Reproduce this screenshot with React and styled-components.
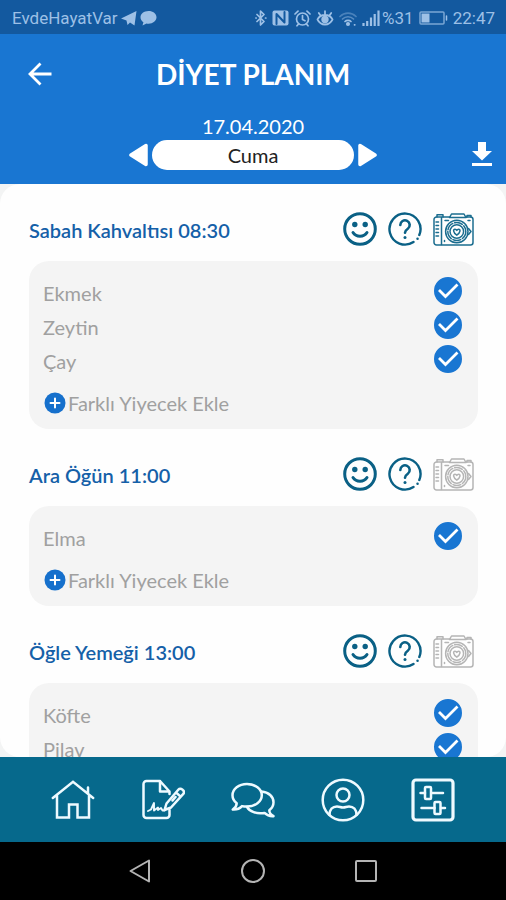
import { useState } from "react";
import styled, { createGlobalStyle } from "styled-components";

const GlobalStyle = createGlobalStyle`
  * {
    box-sizing: border-box;
  }
  body {
    margin: 0;
    font-family: "Lato", "Noto Sans", sans-serif;
    background: #000000;
  }
`;

const Screen = styled.div`
  display: flex;
  flex-direction: column;
  height: 100vh;
`;

const StatusBar = styled.div`
  display: flex;
  flex-shrink: 0;
  align-items: center;
  justify-content: space-between;
  height: 34px;
  padding: 2px 11px 0 12px;
  background: #13599f;
  color: #9dc0e6;
  font-family: "Roboto", sans-serif;
  font-size: 17px;
  line-height: 20px;
`;

const StatusGroup = styled.div`
  display: flex;
  align-items: center;
  gap: ${({ $gap }) => $gap}px;
`;

const Header = styled.header`
  flex-shrink: 0;
  background: #1976d2;
  color: #ffffff;
`;

const TitleBar = styled.div`
  display: grid;
  grid-template-columns: 1fr auto 1fr;
  align-items: center;
  height: 80px;
  padding: 0 24px;
`;

const Title = styled.h1`
  margin: 0;
  font-size: 28px;
  font-weight: 700;
  line-height: 34px;
`;

const IconButton = styled.button`
  display: flex;
  align-items: center;
  justify-content: center;
  justify-self: ${({ $side }) => $side || "auto"};
  padding: 0;
  border: 0;
  background: none;
  color: ${({ $color }) => $color || "inherit"};
  cursor: pointer;
`;

const DateBar = styled.div`
  display: grid;
  grid-template-columns: 1fr 49% 1fr;
  align-items: end;
  height: 70px;
  padding-bottom: 15px;
`;

const DateColumn = styled.div`
  grid-column: 2;
  display: flex;
  flex-direction: column;
  gap: 2px;
`;

const DateText = styled.time`
  font-size: 20px;
  line-height: 24px;
  text-align: center;
`;

const DayRow = styled.div`
  display: flex;
  align-items: center;
  gap: 4px;
`;

const DayPill = styled.div`
  flex: 1;
  height: 30px;
  border-radius: 15px;
  background: #ffffff;
  color: #222222;
  font-size: 20px;
  line-height: 30px;
  text-align: center;
`;

const DownloadSlot = styled.div`
  display: flex;
  justify-content: flex-end;
  padding: 0 12px 2px 0;
`;

const Content = styled.main`
  flex: 1;
  min-height: 0;
  overflow: hidden;
  background: #f3f4f4;
`;

const Sheet = styled.div`
  height: 100%;
  overflow: hidden;
  padding: 28px 28px 0 29px;
  border-radius: 20px;
  background: #fefefe;
`;

const Meal = styled.section`
  margin-bottom: 28px;
`;

const MealHeader = styled.div`
  display: flex;
  align-items: center;
  justify-content: space-between;
  height: 34px;
  margin-bottom: 15px;
  padding-right: 4px;
`;

const MealTitle = styled.h2`
  margin: 0;
  padding-top: 2px;
  color: #1560a8;
  font-size: 20px;
  font-weight: 600;
  line-height: 24px;
`;

const MealActions = styled.div`
  display: flex;
  gap: 11px;
`;

const FoodCard = styled.div`
  padding: 13px 16px 9px 14px;
  border-radius: 20px;
  background: #f4f4f4;
  color: #a0a0a0;
  font-size: 20px;
`;

const FoodRow = styled.label`
  display: flex;
  align-items: center;
  justify-content: space-between;
  height: 34px;
  cursor: pointer;
`;

const FoodName = styled.span`
  padding-top: 4px;
  line-height: 24px;
`;

const CheckBox = styled.span`
  display: grid;

  & > * {
    grid-area: 1 / 1;
  }
  svg {
    pointer-events: none;
  }
  input:not(:checked) + svg {
    visibility: hidden;
  }
`;

const CheckInput = styled.input`
  appearance: none;
  width: 28px;
  height: 28px;
  margin: 0;
  border: 2px solid #1976d2;
  border-radius: 50%;

  &:checked {
    background: #1976d2;
  }
`;

const AddButton = styled.button`
  display: flex;
  align-items: center;
  gap: 2px;
  height: 34px;
  margin-top: 10px;
  padding: 0 0 0 1px;
  border: 0;
  background: none;
  color: inherit;
  font: inherit;
  line-height: 24px;
  cursor: pointer;
`;

const TabBar = styled.nav`
  display: flex;
  flex-shrink: 0;
  height: 85px;
  padding: 0 28px;
  background: #06698c;
`;

const Tab = styled.a`
  display: flex;
  flex: 1;
  align-items: center;
  justify-content: center;
  color: #eefaff;
`;

const SystemBar = styled.div`
  display: flex;
  flex-shrink: 0;
  height: 58px;
  padding: 0 84px;
  background: #000000;
`;

const SystemButton = styled(IconButton)`
  flex: 1;
  color: #b4b4b4;
`;

const Svg = ({ w, h, children, ...rest }) => (
  <svg
    width={w}
    height={h}
    viewBox={`0 0 ${w} ${h}`}
    fill="none"
    stroke="currentColor"
    strokeLinecap="round"
    strokeLinejoin="round"
    aria-hidden="true"
    {...rest}
  >
    {children}
  </svg>
);

const TelegramIcon = () => (
  <Svg w={16} h={16} fill="currentColor" stroke="none">
    <path d="M0 8.500 15.500 1 13.500 15.500 9 12.500 6.500 15 5.500 10.500Z" />
  </Svg>
);

const BubbleIcon = () => (
  <Svg w={17} h={16} fill="currentColor" stroke="none">
    <path d="M8.500 1C4 1 .5 3.800.5 7.300c0 2 1.100 3.800 2.900 5L2.500 15.500l4-2c.6.100 1.300.200 2 .200 4.500 0 8-2.800 8-6.400S13 1 8.500 1Z" />
  </Svg>
);

const BluetoothIcon = () => (
  <Svg w={12} h={18} strokeWidth="1.700">
    <path d="M2 5.500 9 12.500 5.500 16V2L9 5.500 2 12.500M.8 9h.4M10.500 9h.4" />
  </Svg>
);

const NfcIcon = () => (
  <Svg w={17} h={16} stroke="none">
    <rect x="0.500" y="0.500" width="16" height="15" rx="2" fill="currentColor" />
    <path d="M4.500 14V4l8 8.500V2" stroke="#13599f" strokeWidth="2" />
  </Svg>
);

const AlarmIcon = () => (
  <Svg w={17} h={17} strokeWidth="1.700">
    <circle cx="8.500" cy="9" r="6" />
    <path d="M1 4 4 1.200M16 4l-3-2.800M8.500 5.500V9.500l2.500 1.200M4.500 14 3 15.800M12.500 14l1.500 1.800" />
  </Svg>
);

const EyeIcon = () => (
  <Svg w={18} h={18} strokeWidth="1.800">
    <path d="M1.500 10.500C3 7.500 5.800 6 9 6s6 1.500 7.500 4.500C15 13.500 12.200 15.500 9 15.500S3 13.500 1.500 10.500ZM9 5.500V2.200M4.500 6.500 2.800 4M13.500 6.500 15.200 4" />
    <circle cx="9" cy="10.500" r="2.800" fill="currentColor" />
  </Svg>
);

const WifiIcon = () => (
  <Svg w={18} h={17} strokeWidth="1.700">
    <path d="M1 6.500C5.500 2 12.500 2 17 6.500" opacity=".4" />
    <path d="M3.500 9c3-3 8-3 11 0" opacity=".5" />
    <path d="M6 11.500c1.500-1.500 4.500-1.500 6 0" />
    <circle cx="9" cy="14" r="1.200" fill="currentColor" />
    <path d="M15.500 14.800h.3" />
  </Svg>
);

const SignalIcon = () => (
  <Svg w={18} h={17} strokeWidth="2.200" strokeLinecap="butt">
    <path d="M1.500 16v-3M5.200 16v-5M9 16V7.500M12.700 16V4M16.500 16V0.500" />
  </Svg>
);

const BatteryIcon = () => (
  <Svg w={29} h={14} strokeWidth="1.500">
    <rect x="1" y="1" width="24" height="12" rx="1" opacity=".75" />
    <path d="M27.500 5v4" />
    <rect x="2.500" y="2.500" width="8" height="9" fill="currentColor" stroke="none" />
  </Svg>
);

const BackIcon = () => (
  <Svg w={32} h={32} strokeWidth="2.800" strokeLinecap="butt" strokeLinejoin="miter">
    <path d="M27.500 16H6.500M16.500 5.500 6 16l10.500 10.500" />
  </Svg>
);

const TriangleIcon = ({ flipped }) => (
  <Svg w={19} h={24} fill="currentColor" strokeWidth="3.500">
    <path d={flipped ? "M2 2.500V21.500L17 12Z" : "M17 2.500V21.500L2 12Z"} />
  </Svg>
);

const DownloadIcon = () => (
  <Svg w={24} h={28} fill="currentColor" stroke="none">
    <path d="M8 2h8v9h6L12 20.500 2 11h6ZM2 23h20v3H2Z" />
  </Svg>
);

const SmileIcon = () => (
  <Svg w={34} h={34} strokeWidth="3">
    <circle cx="17" cy="17" r="15.300" />
    <path d="M10 20.500c3.200 5 10.800 5 14 0" />
    <circle cx="11.800" cy="12.500" r="2.700" fill="currentColor" stroke="none" />
    <circle cx="22.200" cy="12.500" r="2.700" fill="currentColor" stroke="none" />
  </Svg>
);

const QuestionIcon = () => (
  <Svg w={34} h={34} strokeWidth="2.400">
    <path d="M25.500 30A15.500 15.500 0 1 1 31.300 23" />
    <path d="M12.300 13a4.700 4.700 0 1 1 7.500 3.800c-1.900 1.300-2.800 2-2.800 4" strokeWidth="2.600" />
    <circle cx="17" cy="25.500" r="1.500" fill="currentColor" stroke="none" />
    <path d="M29.500 26.700h.1" />
  </Svg>
);

const CameraIcon = () => (
  <Svg w={41} h={34} strokeWidth="1.500">
    <path d="M17 5H3.500A2.500 2.500 0 0 0 1 7.500v23A2.500 2.500 0 0 0 3.500 33h34a2.500 2.500 0 0 0 2.500-2.500v-23A2.500 2.500 0 0 0 37.500 5H33" />
    <path d="M16.500 5.500 18.500 2h12.500l2 3.500H16.500M4 5V2.800h6V5M34 5V3.500h4V5" />
    <path d="M8.500 5.500V32.500M3 10h2.500M3 13.500h2.500M3 17h2.500M3 20.500h2.500M3 24h2.500M12 8.500h3.500M35 8.500h2M11.500 28.500v1" />
    <circle cx="23.800" cy="19.500" r="11.200" />
    <circle cx="23.800" cy="19.500" r="9" strokeDasharray="8 2" />
    <circle cx="23.800" cy="19.500" r="6.800" />
    <path d="M23.800 23.200c-4-2.700-3.800-6-1.800-6 .9 0 1.500.5 1.800 1.200.3-.7.900-1.200 1.800-1.200 2 0 2.200 3.300-1.800 6Z" />
    <path d="M35.500 16.500 38 19.500l-2.500 3" />
  </Svg>
);

const CheckMark = () => (
  <Svg w={28} h={28} stroke="#ffffff" strokeWidth="2.800" strokeLinecap="butt" strokeLinejoin="miter">
    <path d="M5 13 11.500 19.500 23.500 7.500" />
  </Svg>
);

const PlusIcon = () => (
  <Svg w={22} h={22} stroke="#ffffff" strokeWidth="2">
    <circle cx="11" cy="11" r="10.500" fill="#1670cc" stroke="none" />
    <path d="M11 6.500v9M6.500 11h9" />
  </Svg>
);

const HomeIcon = () => (
  <Svg w={44} h={44} strokeWidth="2.500" strokeLinejoin="miter">
    <path d="M1.800 20 22 3.800 42.200 20M6 17.500V39.500H18V26.500h8.500V39.500H38V17.500M37 15V9.500" />
  </Svg>
);

const NoteIcon = () => (
  <Svg w={44} h={44} strokeWidth="2.500">
    <path d="M28.500 13.500 19 3H5.500A3 3 0 0 0 2.500 6v31a3 3 0 0 0 3 3h20a3 3 0 0 0 3-3v-5M28.500 16v-2.500H19V3" />
    <path d="M23.500 32 25.500 25.500 37.500 11.500a2.500 2.500 0 0 1 3.600-.2l1 .9a2.500 2.500 0 0 1 .2 3.600L30 29.500ZM35 14.500l4.600 4.200M31.500 22.500 34.500 19" />
    <path d="M7 33 10 31.500 13 25v7.500L17 29.500v2.500l3-2 1.500 2.500h2" strokeWidth="1.900" />
  </Svg>
);

const ChatIcon = () => (
  <Svg w={44} h={44} strokeWidth="2.500">
    <path d="M16 6C7.800 6 1.500 11 1.500 17.300c0 3.400 1.600 6 4.200 8C5.700 28 4 30 1.800 31.500c3.700.3 7-1 9.200-3.400 1.600.4 3.200.5 5 .5 8.200 0 14.800-5 14.800-11.300S24.200 6 16 6Z" />
    <path d="M30.500 13.500c7.200.6 12 5.200 12 10.700 0 3.200-1.500 6-4.200 8 0 2.600 1.700 4.600 4.200 6-3.700.3-6.700-1-9-3.300-8 1.300-15-1.200-17.500-6" />
  </Svg>
);

const UserIcon = () => (
  <Svg w={44} h={44} strokeWidth="2.500">
    <circle cx="22" cy="22" r="20.300" />
    <circle cx="22" cy="17" r="6.500" />
    <path d="M8.500 37c0-5.500 3-8.500 7.500-8.500 2.500 0 3.500 1 6 1s3.500-1 6-1c4.500 0 7.500 3 7.500 8.500" />
  </Svg>
);

const SettingsIcon = () => (
  <Svg w={44} h={44} strokeWidth="2.500">
    <rect x="2" y="2" width="40" height="40" rx="3" strokeWidth="3.200" />
    <path d="M9.500 15H14M20.500 15H32M10.500 30H23.500M30 30h4" />
    <rect x="14" y="9" width="6" height="12" rx="1" />
    <rect x="23.500" y="24" width="6" height="12" rx="1" />
  </Svg>
);

const meals = [
  { title: "Sabah Kahvaltısı", time: "08:30", foods: ["Ekmek", "Zeytin", "Çay"], photo: true },
  { title: "Ara Öğün", time: "11:00", foods: ["Elma"] },
  { title: "Öğle Yemeği", time: "13:00", foods: ["Köfte", "Pilav"] },
];

const tabs = [
  { id: "home", label: "Ana Sayfa", icon: <HomeIcon /> },
  { id: "notes", label: "Notlar", icon: <NoteIcon /> },
  { id: "chat", label: "Mesajlar", icon: <ChatIcon /> },
  { id: "profile", label: "Profil", icon: <UserIcon /> },
  { id: "settings", label: "Ayarlar", icon: <SettingsIcon /> },
];

const FoodItem = ({ name }) => {
  const [checked, setChecked] = useState(true);
  return (
    <FoodRow>
      <FoodName>{name}</FoodName>
      <CheckBox>
        <CheckInput
          type="checkbox"
          checked={checked}
          onChange={(e) => setChecked(e.target.checked)}
        />
        <CheckMark />
      </CheckBox>
    </FoodRow>
  );
};

const MealSection = ({ title, time, foods, photo }) => (
  <Meal>
    <MealHeader>
      <MealTitle>
        {title} {time}
      </MealTitle>
      <MealActions>
        <IconButton $color="#0a6085" aria-label="Değerlendir">
          <SmileIcon />
        </IconButton>
        <IconButton $color="#0a6085" aria-label="Yardım">
          <QuestionIcon />
        </IconButton>
        <IconButton $color={photo ? "#1b6d8f" : "#b5b5b5"} aria-label="Fotoğraf">
          <CameraIcon />
        </IconButton>
      </MealActions>
    </MealHeader>
    <FoodCard>
      {foods.map((food) => (
        <FoodItem key={food} name={food} />
      ))}
      <AddButton>
        <PlusIcon />
        Farklı Yiyecek Ekle
      </AddButton>
    </FoodCard>
  </Meal>
);

const App = () => {
  return (
    <Screen lang="tr">
      <GlobalStyle />
      <StatusBar>
        <StatusGroup $gap={3}>
          <span>EvdeHayatVar</span>
          <TelegramIcon />
          <BubbleIcon />
        </StatusGroup>
        <StatusGroup $gap={5}>
          <BluetoothIcon />
          <NfcIcon />
          <AlarmIcon />
          <EyeIcon />
          <WifiIcon />
          <StatusGroup $gap={2}>
            <SignalIcon />
            <span>%31</span>
          </StatusGroup>
          <BatteryIcon />
          <span>22:47</span>
        </StatusGroup>
      </StatusBar>
      <Header>
        <TitleBar>
          <IconButton $side="start" aria-label="Geri">
            <BackIcon />
          </IconButton>
          <Title>DİYET PLANIM</Title>
        </TitleBar>
        <DateBar>
          <DateColumn>
            <DateText dateTime="2020-04-17">17.04.2020</DateText>
            <DayRow>
              <IconButton aria-label="Önceki gün">
                <TriangleIcon />
              </IconButton>
              <DayPill>Cuma</DayPill>
              <IconButton aria-label="Sonraki gün">
                <TriangleIcon flipped />
              </IconButton>
            </DayRow>
          </DateColumn>
          <DownloadSlot>
            <IconButton aria-label="İndir">
              <DownloadIcon />
            </IconButton>
          </DownloadSlot>
        </DateBar>
      </Header>
      <Content>
        <Sheet>
          {meals.map((meal) => (
            <MealSection key={meal.title} {...meal} />
          ))}
        </Sheet>
      </Content>
      <TabBar>
        {tabs.map(({ id, label, icon }) => (
          <Tab key={id} href={`#${id}`} aria-label={label}>
            {icon}
          </Tab>
        ))}
      </TabBar>
      <SystemBar>
        <SystemButton aria-label="Geri">
          <Svg w={24} h={26} strokeWidth="2">
            <path d="M21 2.500V23.500L2.500 13Z" />
          </Svg>
        </SystemButton>
        <SystemButton aria-label="Ana ekran">
          <Svg w={26} h={26} strokeWidth="2">
            <circle cx="13" cy="13" r="11" />
          </Svg>
        </SystemButton>
        <SystemButton aria-label="Son uygulamalar">
          <Svg w={24} h={24} strokeWidth="2">
            <rect x="2" y="2" width="20" height="20" rx="1" />
          </Svg>
        </SystemButton>
      </SystemBar>
    </Screen>
  );
};

export default App;
